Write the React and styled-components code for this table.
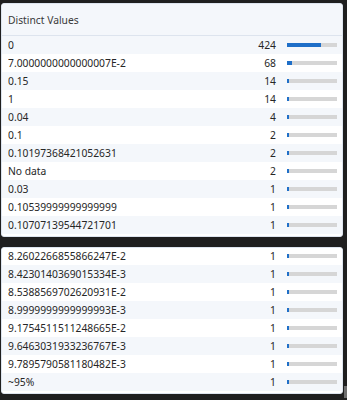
import React from "react";
import styled, { createGlobalStyle } from "styled-components";

const GlobalStyle = createGlobalStyle`
  html, body { margin: 0; padding: 0; }
  body {
    background: #1f1f1f;
    font-family: "Noto Sans", "Open Sans", sans-serif;
    font-size: 10.3px;
    color: #262626;
  }
`;

const Page = styled.div`
  position: relative;
  width: 347px;
  height: 400px;
  overflow: hidden;
  padding: 3px 0 0 1px;
  box-sizing: border-box;
  display: flex;
  flex-direction: column;
  gap: 10px;
`;

const Panel = styled.div`
  width: 342px;
  box-sizing: border-box;
  border: 1px solid #dde4ee;
  border-radius: 3px;
  background: #fff;
  overflow: hidden;
  padding-bottom: 2px;
`;

const Header = styled.div`
  height: 32px;
  display: flex;
  align-items: center;
  padding: 1px 6px 0;
  box-sizing: border-box;
  background: #f4f7fb;
  border-bottom: 1px solid #dde4ee;
  color: #3a3a3a;
`;

const List = styled.div`
  display: flex;
  flex-direction: column;
  margin-top: ${(p) => p.$offset || 0}px;
`;

const Row = styled.div`
  height: 18px;
  display: grid;
  grid-template-columns: 1fr auto 50px;
  column-gap: 11px;
  align-items: center;
  padding: 0 5px 0 6px;
  background: ${(p) => (p.$shaded ? "#f4f7fb" : "#ffffff")};
  line-height: 18px;
`;

const Label = styled.span`
  white-space: nowrap;
  overflow: hidden;
`;

const Count = styled.span`
  text-align: right;
`;

const Track = styled.div`
  height: 4px;
  background: #d6d6d6;
`;

const Fill = styled.div`
  height: 100%;
  background: #1f6fc8;
  min-width: 2px;
`;

const ScrollThumb = styled.div`
  position: absolute;
  right: 0;
  top: 386px;
  width: 3px;
  height: 12px;
  background: #6e6e6e;
`;

const TOTAL = 622;

const top = [
  ["0", 424],
  ["7.0000000000000007E-2", 68],
  ["0.15", 14],
  ["1", 14],
  ["0.04", 4],
  ["0.1", 2],
  ["0.10197368421052631", 2],
  ["No data", 2],
  ["0.03", 1],
  ["0.10539999999999999", 1],
  ["0.10707139544721701", 1],
];

const bottom = [
  ["8.2602266855866247E-2", 1],
  ["8.4230140369015334E-3", 1],
  ["8.5388569702620931E-2", 1],
  ["8.9999999999999993E-3", 1],
  ["9.1754511511248665E-2", 1],
  ["9.6463031933236767E-3", 1],
  ["9.7895790581180482E-3", 1],
  ["~95%", 1],
];

function ValueRow({ label, count, shaded }) {
  return (
    <Row $shaded={shaded}>
      <Label>{label}</Label>
      <Count>{count}</Count>
      <Track>
        <Fill style={{ width: `${(count / TOTAL) * 100}%` }} />
      </Track>
    </Row>
  );
}

export default function App() {
  return (
    <>
      <GlobalStyle />
      <Page>
        <Panel>
          <Header>Distinct Values</Header>
          <List>
            {top.map(([l, c], i) => (
              <ValueRow key={l} label={l} count={c} shaded={i % 2 === 0} />
            ))}
          </List>
        </Panel>
        <Panel>
          <List $offset={-1}>
            {bottom.map(([l, c], i) => (
              <ValueRow key={l} label={l} count={c} shaded={i % 2 === 1} />
            ))}
          </List>
        </Panel>
        <ScrollThumb />
      </Page>
    </>
  );
}
